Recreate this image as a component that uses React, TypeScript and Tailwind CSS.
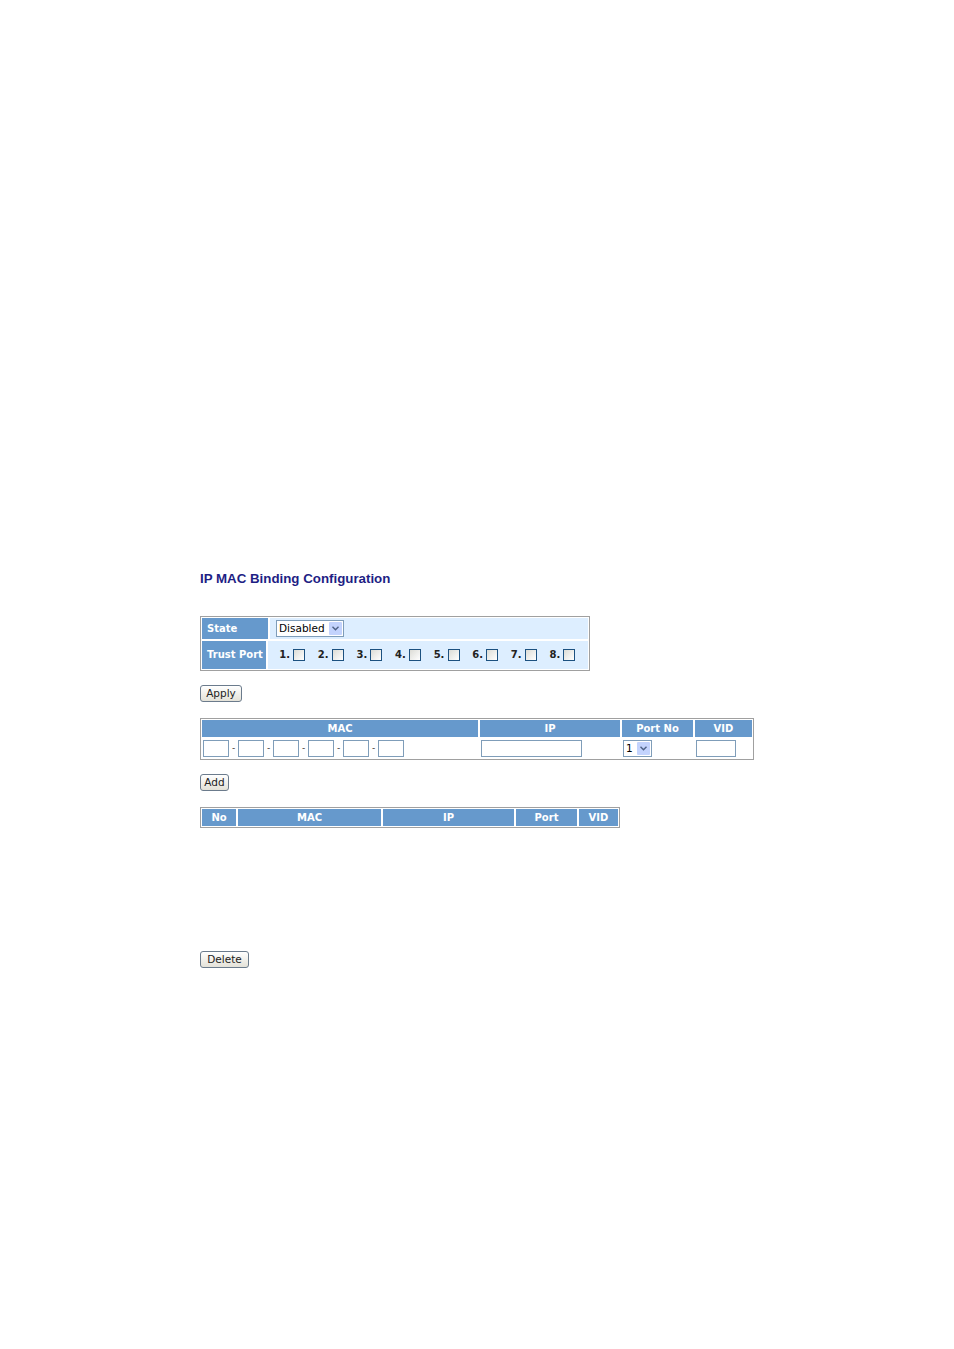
import React from "react";

const head = "bg-[#6699cc] text-white font-bold text-[10px] leading-none whitespace-nowrap flex items-center justify-center";
const verdana = { fontFamily: '"DejaVu Sans", Verdana, sans-serif' };

function Button({ label, w }: { label: string; w: string }) {
  return (
    <button
      className={`h-[17px] ${w} rounded-[3px] border border-[#6b7b8c] bg-gradient-to-b from-white to-[#e4e2d8] text-[10.5px] leading-none text-[#222] flex items-center justify-center`}
      style={verdana}
    >
      {label}
    </button>
  );
}

function Checkbox() {
  return <span className="inline-block h-[12px] w-[12px] border border-[#1c5180] bg-gradient-to-br from-[#dcdcd6] to-white" />;
}

function Select({ value, w }: { value: string; w: string }) {
  return (
    <div className={`flex h-[17px] ${w} items-center border border-[#7f9db9] bg-white`}>
      <span className="flex-1 pl-[2px] text-[10.5px] leading-none text-black" style={verdana}>
        {value}
      </span>
      <span className="mr-[1px] flex h-[13px] w-[13px] items-center justify-center rounded-[1px] bg-[#c3d3fd]">
        <svg width="7" height="5" viewBox="0 0 7 5">
          <path d="M0.5 0.8 L3.5 3.8 L6.5 0.8" fill="none" stroke="#4d6185" strokeWidth="1.4" />
        </svg>
      </span>
    </div>
  );
}

function TextBox({ w }: { w: string }) {
  return <span className={`inline-block h-[17px] ${w} border border-[#7f9db9] bg-white`} />;
}

export default function App() {
  const ports = [1, 2, 3, 4, 5, 6, 7, 8];
  return (
    <div className="min-h-[1349px] w-[954px] bg-white">
      <div className="flex flex-col pl-[200px] pt-[571px]">
        <h1
          className="text-[13.3px] font-bold leading-[16px] text-[#1e1e84]"
          style={{ fontFamily: '"Liberation Sans", Arial, sans-serif' }}
        >
          IP MAC Binding Configuration
        </h1>

        {/* state / trust port */}
        <div className="mt-[29px] flex w-[390px] flex-col gap-[2px] border border-[#a0a0a0] p-[1px]" style={verdana}>
          <div className="flex h-[21px] gap-[2px]">
            <div className={`${head} w-[66px] !justify-start pl-[5px]`}>State</div>
            <div className="flex flex-1 items-center bg-[#ddeeff] pl-[6px]">
              <Select value="Disabled" w="w-[68px]" />
            </div>
          </div>
          <div className="flex h-[28px] gap-[2px]">
            <div className={`${head} w-[66px] !justify-start pl-[5px]`}>Trust Port</div>
            <div className="flex flex-1 items-center bg-[#ddeeff] pl-[11px]">
              {ports.map((p) => (
                <span key={p} className="flex w-[38.6px] items-center gap-[4px]">
                  <span className="w-[10px] text-[10px] font-bold leading-none text-[#222]">{p}.</span>
                  <Checkbox />
                </span>
              ))}
            </div>
          </div>
        </div>

        <div className="mt-[14px]">
          <Button label="Apply" w="w-[42px]" />
        </div>

        {/* add entry */}
        <div className="mt-[16px] flex w-[554px] flex-col gap-[2px] border border-[#a0a0a0] p-[1px]" style={verdana}>
          <div className="flex h-[17px] gap-[2px]">
            <div className={`${head} w-[276px]`}>MAC</div>
            <div className={`${head} w-[140px]`}>IP</div>
            <div className={`${head} w-[71px]`}>Port No</div>
            <div className={`${head} flex-1`}>VID</div>
          </div>
          <div className="flex h-[19px] gap-[2px]">
            <div className="flex w-[276px] items-center pl-[1px]">
              {[0, 1, 2, 3, 4, 5].map((i) => (
                <React.Fragment key={i}>
                  {i > 0 && <span className="w-[9px] text-center text-[9px] leading-none text-[#333]">-</span>}
                  <TextBox w="w-[26px]" />
                </React.Fragment>
              ))}
            </div>
            <div className="flex w-[140px] items-center pl-[1px]">
              <TextBox w="w-[101px]" />
            </div>
            <div className="flex w-[71px] items-center pl-[1px]">
              <Select value="1" w="w-[29px]" />
            </div>
            <div className="flex flex-1 items-center pl-[1px]">
              <TextBox w="w-[40px]" />
            </div>
          </div>
        </div>

        <div className="mt-[14px]">
          <Button label="Add" w="w-[29px]" />
        </div>

        {/* list */}
        <div className="mt-[16px] flex w-[420px] gap-[2px] border border-[#a0a0a0] p-[1px]" style={verdana}>
          <div className={`${head} h-[17px] w-[34px]`}>No</div>
          <div className={`${head} h-[17px] w-[143px]`}>MAC</div>
          <div className={`${head} h-[17px] w-[131px]`}>IP</div>
          <div className={`${head} h-[17px] w-[61px]`}>Port</div>
          <div className={`${head} h-[17px] flex-1`}>VID</div>
        </div>

        <div className="mt-[123px]">
          <Button label="Delete" w="w-[49px]" />
        </div>
      </div>
    </div>
  );
}
